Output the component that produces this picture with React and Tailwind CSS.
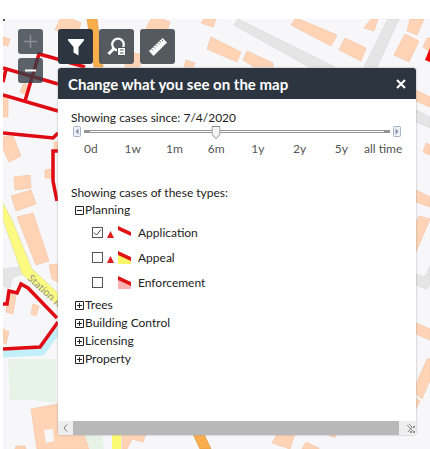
import { useState } from "react";

const STEPS = ["0d", "1w", "1m", "6m", "1y", "2y", "5y", "all time"];

const TYPES = [
  { name: "Application", point: true, fill: "#ffffff" },
  { name: "Appeal", point: true, fill: "#fdf66b" },
  { name: "Enforcement", point: false, fill: "#fbb4b4" },
];

const GROUPS = ["Trees", "Building Control", "Licensing", "Property"];

function MapBackground() {
  return (
    <svg
      className="absolute inset-0 h-full w-full"
      viewBox="3 19 427 430"
      preserveAspectRatio="xMinYMin slice"
      aria-hidden="true"
    >
      <rect x="3" y="19" width="1000" height="1000" fill="#f7f7fa" />
      {/* green space and water */}
      <path d="M8 359H56V403L33 400L10 400Z M84 434H102L104 449H90Z" fill="#e8f3e7" />
      <path d="M3 354L42 352L59 328" fill="none" stroke="#c3eff9" strokeWidth="7" />
      {/* minor roads */}
      <g fill="#e5e5e5" stroke="#d6d6d6" strokeWidth="0.6">
        <path d="M238 19L335 67H309L234 25Z" />
        <path d="M388 19H399L377 67H364Z" />
        <path d="M416 110L430 117V128L416 122Z" />
        <path d="M416 274L425 277L430 266V284L427 289L416 285Z" />
        <path d="M3 269L20 267L27 272L12 278L10 288L3 286Z" />
      </g>
      {/* main roads */}
      <path d="M3 203L12 220L32 269L58 293V306L22 274L3 220Z" fill="#fcfa80" stroke="#d8d8a0" strokeWidth="0.6" />
      <path d="M112 434H121V449H112Z" fill="#fcfa70" />
      <path d="M87 19H97L103 67H94Z M193 434H204L211 449H200Z" fill="#f9ad4b" stroke="#dc9b4d" strokeWidth="0.7" />
      {/* buildings */}
      <g fill="#ffd3b5" stroke="#f3c5a7" strokeWidth="0.7">
        <path d="M60 19H72L81 23L77 35L55 30Z" />
        <path d="M3 37L10 39L8 46L3 45Z" />
        <path d="M146 28L151 19H162L170 22L167 32L160 38Z" />
        <path d="M204 19H216L213 27L201 23Z" />
        <path d="M211 37L241 52L237 62L207 49Z" />
        <path d="M247 51L273 63V67H254L243 60Z" />
        <path d="M295 19H299L337 35L331 46L291 25Z" />
        <path d="M345 38L366 48L361 61L339 50Z" />
        <path d="M371 19H378L374 31L364 28Z" />
        <path d="M410 19H424L417 35L407 31Z" />
        <path d="M405 34L419 41L409 62L394 55Z" />
        <path d="M427 38H430V52L423 47Z" />
        <path d="M186 60L195 63L193 67H184Z" />
        <path d="M127 51L143 55L140 67H125Z" />
        <path d="M24 83L30 86L27 95L20 92Z M3 95L8 97V117H3Z" />
        <path d="M3 137L13 136L21 156L9 162L3 149Z" />
        <path d="M14 177L30 175L31 188L15 190Z" />
        <path d="M11 196L31 190L36 204L16 211Z" />
        <path d="M17 217L33 213L49 261L36 265Z" />
        <path d="M45 170L52 169V178H45Z M54 142H58V150L54 149Z" />
        <path d="M49 265L58 264V282L52 279Z" />
        <path d="M8 292L16 296L13 314L6 312Z M33 304L39 306L36 316L31 314Z" />
        <path d="M3 329L9 332L6 344L3 343Z" />
        <path d="M31 409L58 404V434H84L89 449H37Z" />
        <path d="M16 446L25 446L26 449H15Z M122 434H146L143 442L132 439L127 449H122Z" />
        <path d="M277 434H295L290 449L272 443Z M306 442L319 448V449H302Z M327 434H337L334 438Z" />
        <path d="M416 90L430 97V107L416 101Z" />
        <path d="M426 143L430 145V155L423 152Z" />
        <path d="M416 190L430 197V207L416 202Z" />
        <path d="M419 216L430 219L416 252V222Z" />
        <path d="M416 323L430 329V340L416 334Z" />
        <path d="M430 359V380L422 399L416 394V384L427 359Z" />
        <path d="M416 398L420 401L416 409Z" />
      </g>
      <path d="M44 430L53 429L54 441L46 443Z" fill="#f7f7fa" />
      {/* case outlines */}
      <g fill="none" stroke="#df0a12" strokeWidth="3.500">
        <path d="M3 68L58 84M3 95L58 111M6 69L3 82M25 101L39 54L50 57L85 67M3 133L53 138L58 133M58 151H53V181L57 201" />
        <path d="M3 304H7L9 291L17 293L21 284L28 288L57 318M3 349L40 347L58 322" />
      </g>
      <path d="M430 48V62L425 60Z" fill="#f00000" />
      <path d="M3 19H5V21H3Z" fill="#555555" />
      <text
        x="27"
        y="279"
        transform="rotate(43 27 279)"
        fill="#8a8a8a"
        className="font-['Open_Sans',sans-serif] text-[10px]"
      >
        Station Road
      </text>
    </svg>
  );
}

function ToggleBox({ open }) {
  return (
    <svg className="h-[9px] w-[9px]" viewBox="0 0 9 9" fill="none" stroke="#222222" aria-hidden="true">
      <path d="M.5 .5H8.5V8.5H.5ZM2 4.5H7" />
      {!open && <path d="M4.5 2V7" />}
    </svg>
  );
}

function StepArrow({ back }) {
  return (
    <svg className="h-[12px] w-[8px]" viewBox="0 0 8 12" aria-hidden="true">
      <rect x=".5" y=".5" width="7" height="10" rx="1" fill="#edf1f8" stroke="#a9b5c6" />
      <path d={back ? "M5.500 2.500V8.500L2.500 5.500Z" : "M2.500 2.500V8.500L5.500 5.500Z"} fill="#8492ab" />
    </svg>
  );
}

export default function App() {
  const [step, setStep] = useState(3);
  const [checked, setChecked] = useState({ Application: true });
  const [planningOpen, setPlanningOpen] = useState(true);

  return (
    <div className="flex min-h-screen flex-col bg-white pt-[19px] pl-[3px] font-[Lato,sans-serif] text-[12px] leading-4 text-[#222222]">
      <div className="relative flex flex-1 gap-[15px] overflow-hidden pt-2.5 pr-3.5 pb-3.5 pl-[15px]">
        <MapBackground />

        <div className="relative flex flex-col gap-1">
          <button aria-label="Zoom in" className="flex h-[25px] w-[25px] items-center justify-center rounded-[3px] bg-[#343c46]/80 text-[#8b9097]">
            <svg className="h-[15px] w-[15px]" viewBox="0 0 15 15" stroke="currentColor" strokeWidth="1.500"><path d="M7.500 1V14M1 7.500H14" /></svg>
          </button>
          <button aria-label="Zoom out" className="flex h-[25px] w-[25px] items-center justify-center rounded-[3px] bg-[#343c46]/80 text-white">
            <svg className="h-[15px] w-[15px]" viewBox="0 0 15 15" stroke="currentColor" strokeWidth="2"><path d="M2 7.500H13" /></svg>
          </button>
        </div>

        <div className="relative flex min-w-0 flex-1 flex-col gap-1">
          <div className="flex gap-1.5">
            <button aria-label="Filter" className="flex h-[35px] w-[35px] items-center justify-center rounded-[3px] bg-[#2d3640]">
              <svg className="h-5 w-5" viewBox="0 0 20 20" fill="#ffffff"><path d="M2 2H18V3.500L12.500 10V18.500L7.500 15.500V10L2 3.500Z" /></svg>
            </button>
            <button aria-label="Search" className="flex h-[35px] w-[35px] items-center justify-center rounded-[3px] bg-[#4c5159]/95">
              <svg className="h-5 w-5" viewBox="0 0 20 20" fill="none">
                <circle cx="11" cy="7.500" r="5.800" stroke="#ffffff" strokeWidth="2.200" />
                <path d="M7 11.500L1.500 17" stroke="#ffffff" strokeWidth="3" />
                <path d="M10.500 10.500H18.500V18.500H10.500Z" fill="#ffffff" stroke="#4c5159" />
                <path d="M13 13H16.500M13 16H16.500" stroke="#4c5159" />
              </svg>
            </button>
            <button aria-label="Measure" className="flex h-[35px] w-[35px] items-center justify-center rounded-[3px] bg-[#4c5159]/95">
              <svg className="h-5 w-5" viewBox="0 0 20 20">
                <path d="M1 14L14.500 1L19 5.500L5.500 19Z" fill="#ffffff" />
                <path d="M3.500 12L5 13.500M5.500 10L7 11.500M7.500 8L9 9.500M9.500 6L11 7.500M11.500 4L13 5.500M13.500 2.500L15 4" stroke="#4c5159" strokeWidth=".9" />
              </svg>
            </button>
          </div>

          <section className="flex flex-1 flex-col rounded-[3px] bg-white shadow-[0_0_2px_#9a9a9a]">
            <header className="flex h-[31px] items-center justify-between rounded-t-[3px] bg-[#2d3640] px-2.5 text-white">
              <h1 className="text-[15px] font-bold">Change what you see on the map</h1>
              <button aria-label="Close" className="h-2.5 w-2.5">
                <svg className="h-2.5 w-2.5" viewBox="0 0 10 10" stroke="currentColor" strokeWidth="2"><path d="M1 1L9 9M9 1L1 9" /></svg>
              </button>
            </header>

            <div className="flex-1 px-3 pt-[11px]">
              <label htmlFor="since" className="block pl-px">Showing cases since: 7/4/2020</label>
              <div className="flex items-center gap-[3px] px-[3px]">
                <button aria-label="Earlier" onClick={() => setStep(Math.max(0, step - 1))}><StepArrow back /></button>
                <div className="relative h-3 flex-1">
                  <div className="mt-1 h-[3px] border-x-[6px] border-y border-[#949494] bg-white" />
                  <div className="absolute inset-x-[7px] top-0">
                    <svg
                      className="absolute h-[13px] w-[9px] -translate-x-1/2"
                      style={{ left: `${(step / 7) * 100}%` }}
                      viewBox="0 0 9 13"
                      aria-hidden="true"
                    >
                      <path d="M.5 .5H8.5V8.500L4.500 12.500L.5 8.500Z" fill="#f4f4f4" stroke="#8b8b8b" />
                    </svg>
                  </div>
                  <input
                    id="since"
                    type="range"
                    min="0"
                    max="7"
                    value={step}
                    onChange={(e) => setStep(Number(e.target.value))}
                    className="absolute inset-0 h-3 w-full opacity-0"
                  />
                </div>
                <button aria-label="Later" onClick={() => setStep(Math.min(7, step + 1))}><StepArrow /></button>
              </div>
              <div className="mt-[3px] grid grid-cols-8 text-center text-[#555555]">
                {STEPS.map((s) => <span key={s} className="whitespace-nowrap">{s}</span>)}
              </div>

              <p className="mt-7 pl-px">Showing cases of these types:</p>
              <div className="pl-[5px]">
                <button
                  aria-expanded={planningOpen}
                  onClick={() => setPlanningOpen(!planningOpen)}
                  className="flex h-[18px] items-center gap-px"
                >
                  <ToggleBox open={planningOpen} />Planning
                </button>
                {planningOpen && (
                  <ul className="py-px pl-[17px]">
                    {TYPES.map((t) => (
                      <li key={t.name}>
                        <label className="flex h-[25px] items-center">
                          <input
                            type="checkbox"
                            checked={!!checked[t.name]}
                            onChange={() => setChecked({ ...checked, [t.name]: !checked[t.name] })}
                            className="peer h-[11px] w-[11px] appearance-none border border-[#555555] bg-white"
                          />
                          <svg className="pointer-events-none -ml-[11px] h-[11px] w-[11px] opacity-0 peer-checked:opacity-100" viewBox="0 0 11 11" fill="none" stroke="#444444" aria-hidden="true">
                            <path d="M2 5.500L4.500 8L9 2.500" />
                          </svg>
                          <svg className="ml-1 h-4 w-[31px]" viewBox="0 0 31 16" aria-hidden="true">
                            {t.point && <path d="M3.500 6L7 13H0Z" fill="#e11b1b" />}
                            <path d="M11 3L24 9V14H11Z" fill={t.fill} />
                            <path d="M11 1L24 7V11L11 5Z" fill="#e01414" />
                          </svg>
                          {t.name}
                        </label>
                      </li>
                    ))}
                  </ul>
                )}
                {GROUPS.map((g) => (
                  <button key={g} aria-expanded="false" className="flex h-[18px] items-center gap-px">
                    <ToggleBox />{g}
                  </button>
                ))}
              </div>
            </div>

            <div className="flex h-[14px] overflow-hidden rounded-b-[3px] bg-[#eeeeee]" aria-hidden="true">
              <svg className="h-[14px] w-[15px]" viewBox="0 0 15 14" fill="none" stroke="#777777"><path d="M9 3.500L6 7L9 10.500" /></svg>
              <div className="flex-1 bg-[#b8b8b8]" />
              <svg className="h-[14px] w-[17px]" viewBox="0 0 17 14" fill="none" stroke="#888888">
                <path d="M8 4L14 10M10 3L13 6L9 11" />
                <path d="M14 6H16M11 11H16" stroke="#333333" strokeDasharray="2 1" />
              </svg>
            </div>
          </section>
        </div>
      </div>
    </div>
  );
}
